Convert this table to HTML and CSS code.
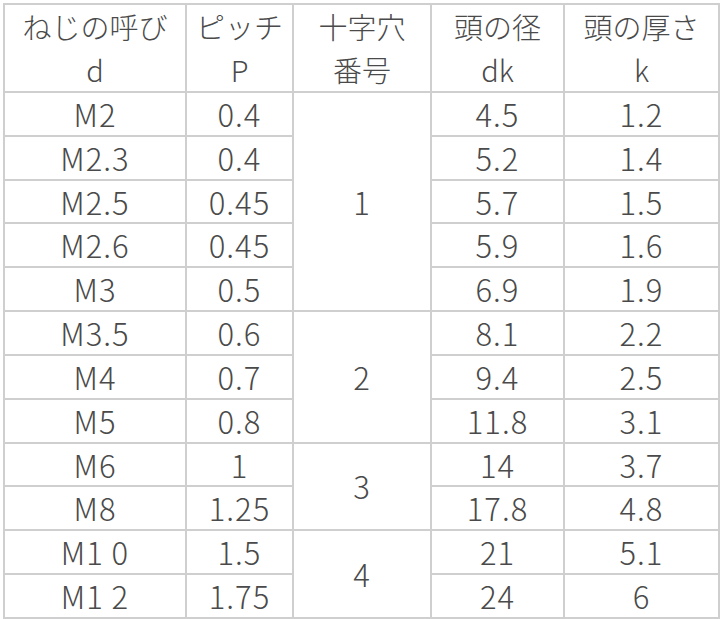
FILE: index.html
```html
<!DOCTYPE html>
<html lang="ja">
<head>
<meta charset="utf-8">
<link rel="stylesheet" href="styles.css">
</head>
<body>
<table class="spec">
  <colgroup>
    <col class="c1"><col class="c2"><col class="c3"><col class="c4"><col class="c5">
  </colgroup>
  <thead>
    <tr class="head">
      <th>ねじの呼び<br>d</th>
      <th>ピッチ<br>P</th>
      <th>十字穴<br>番号</th>
      <th>頭の径<br>dk</th>
      <th>頭の厚さ<br>k</th>
    </tr>
  </thead>
  <tbody>
    <tr><td>M2</td><td>0.4</td><td rowspan="5">1</td><td>4.5</td><td>1.2</td></tr>
    <tr><td>M2.3</td><td>0.4</td><td>5.2</td><td>1.4</td></tr>
    <tr><td>M2.5</td><td>0.45</td><td>5.7</td><td>1.5</td></tr>
    <tr><td>M2.6</td><td>0.45</td><td>5.9</td><td>1.6</td></tr>
    <tr><td>M3</td><td>0.5</td><td>6.9</td><td>1.9</td></tr>
    <tr><td>M3.5</td><td>0.6</td><td rowspan="3">2</td><td>8.1</td><td>2.2</td></tr>
    <tr><td>M4</td><td>0.7</td><td>9.4</td><td>2.5</td></tr>
    <tr><td>M5</td><td>0.8</td><td>11.8</td><td>3.1</td></tr>
    <tr><td>M6</td><td>1</td><td rowspan="2">3</td><td>14</td><td>3.7</td></tr>
    <tr><td>M8</td><td>1.25</td><td>17.8</td><td>4.8</td></tr>
    <tr><td>M1 0</td><td>1.5</td><td rowspan="2">4</td><td>21</td><td>5.1</td></tr>
    <tr><td>M1 2</td><td>1.75</td><td>24</td><td>6</td></tr>
  </tbody>
</table>
</body>
</html>
```
FILE: styles.css
```css
html, body {
  margin: 0;
  padding: 0;
  background: #fff;
}
body {
  padding: 3px 0 0 3px;
}
.spec {
  border-collapse: collapse;
  table-layout: fixed;
  width: 715px;
  font-family: "Noto Sans CJK JP", "Noto Sans", sans-serif;
  font-weight: 300;
  color: #4a4a4a;
  font-variant-numeric: tabular-nums;
}
.c1 { width: 182px; }
.c2 { width: 107px; }
.c3 { width: 138px; }
.c4 { width: 133px; }
.c5 { width: 155px; }
.spec th, .spec td {
  border: 2px solid #cfcfcf;
  text-align: center;
  vertical-align: middle;
  padding: 0;
  font-weight: 300;
}
.spec th {
  font-size: 29px;
  line-height: 43px;
  height: 86px;
}
.spec td {
  font-size: 31px;
  letter-spacing: 1px;
  line-height: 30px;
  height: 41.83px;
}
```
